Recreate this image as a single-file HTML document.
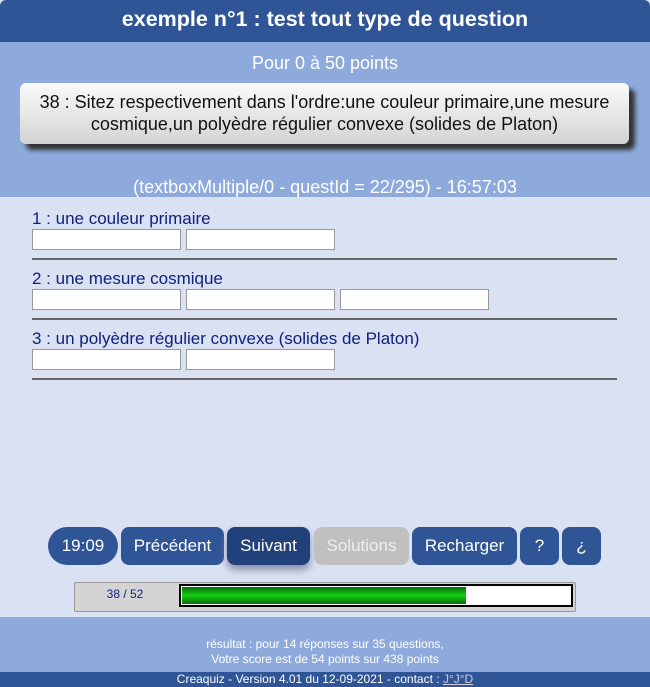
<!DOCTYPE html><html><head><style>
body{margin:0;width:650px;height:687px;font-family:"Liberation Sans",sans-serif;background:#dae1f2;position:relative;overflow:hidden}
div{position:absolute;box-sizing:border-box}
.hd{left:0;top:0;width:650px;height:42px;background:#2f5597;color:#fff;font-weight:bold;font-size:21.5px;text-align:center;line-height:38px;border-radius:6px 6px 0 0}
.lb{left:0;top:42px;width:650px;height:155px;background:#8eaadc}
.q{left:20px;top:83px;width:609px;height:61px;border-radius:6px;background:linear-gradient(#fafafa,#d4d4d4);box-shadow:6px 6px 5px #333;font-size:18px;text-align:center;line-height:22px;padding-top:8px;color:#111}
.lab{left:32px;color:#102080;font-size:17px}
input{position:absolute;height:21px;width:149px;border:1px solid #999;background:#fff;box-sizing:border-box;margin:0}
.ln{left:32px;width:585px;height:2px;background:#666}
.b{top:527px;height:38px;background:#2f5597;color:#fff;border-radius:8px;font-size:17px;text-align:center;line-height:38px}
</style></head><body>
<div class="hd">exemple n°1 : test tout type de question</div>
<div class="lb"></div>
<div style="left:0;top:53px;width:650px;text-align:center;color:#fff;font-size:18px">Pour 0 à 50 points</div>
<div class="q">38 : Sitez respectivement dans l'ordre:une couleur primaire,une mesure<br>cosmique,un polyèdre régulier convexe (solides de Platon)</div>
<div style="left:0;top:177px;width:650px;text-align:center;color:#fff;font-size:18px">(textboxMultiple/0 - questId = 22/295) - 16:57:03</div>
<div class="lab" style="top:209px">1 : une couleur primaire</div>
<input style="left:32px;top:229px"><input style="left:186px;top:229px">
<div class="ln" style="top:258px"></div>
<div class="lab" style="top:269px">2 : une mesure cosmique</div>
<input style="left:32px;top:289px"><input style="left:186px;top:289px"><input style="left:340px;top:289px">
<div class="ln" style="top:318px"></div>
<div class="lab" style="top:329px">3 : un polyèdre régulier convexe (solides de Platon)</div>
<input style="left:32px;top:349px"><input style="left:186px;top:349px">
<div class="ln" style="top:378px"></div>
<div class="b" style="left:48px;width:70px;border-radius:19px">19:09</div>
<div class="b" style="left:121px;width:103px">Précédent</div>
<div class="b" style="left:227px;width:83px;background:#22407a;box-shadow:0 5px 8px #8890a8">Suivant</div>
<div class="b" style="left:314px;width:95px;background:#c0c0c0;color:#eee">Solutions</div>
<div class="b" style="left:412px;width:105px">Recharger</div>
<div class="b" style="left:520px;width:39px">?</div>
<div class="b" style="left:562px;width:39px">¿</div>
<div style="left:74px;top:582px;width:502px;height:30px;background:#d4d4d4;border:1px solid #999;border-radius:2px"></div>
<div style="left:80px;top:587px;width:90px;text-align:center;color:#102080;font-size:12px">38 / 52</div>
<div style="left:179px;top:584px;width:394px;height:23px;background:#fff;border:2px solid #000"></div>
<div style="left:182px;top:587px;width:284px;height:17px;background:linear-gradient(#0a6a0a,#10d010 50%,#0a6a0a)"></div>
<div style="left:0;top:617px;width:650px;height:55px;background:#8eaadc;color:#fff;font-size:12px;text-align:center;line-height:15px;padding-top:20px">résultat : pour 14 réponses sur 35 questions,<br>Votre score est de 54 points sur 438 points</div>
<div style="left:0;top:672px;width:650px;height:15px;background:#2f5597;color:#fff;font-size:12px;text-align:center;line-height:15px">Creaquiz - Version 4.01 du 12-09-2021 - contact : <u style="color:#ccd">J°J°D</u></div>
</body></html>
